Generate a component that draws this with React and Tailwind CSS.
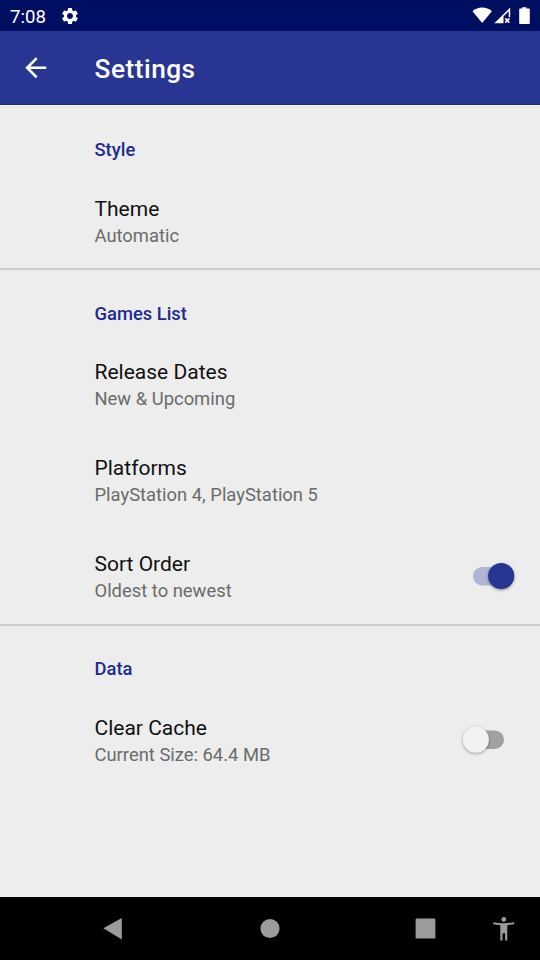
import React from "react";

function Category({ children, className = "" }) {
  return (
    <h2 className={`pl-[94.5px] text-[18.375px] leading-[22px] font-medium text-[#1c2a91] ${className}`}>
      {children}
    </h2>
  );
}

function Toggle({ on }) {
  return (
    <svg className="mr-[20px] shrink-0" width="60" height="40" viewBox="0 0 60 40">
      {on ? (
        <>
          <rect x="13" y="11" width="38" height="18.4" rx="9.2" fill="#b0b5d6" />
          <circle cx="41.2" cy="20.1" r="13.1" fill="#283593" className="drop-shadow-[0_1.5px_1.5px_rgba(0,0,0,0.35)]" />
        </>
      ) : (
        <>
          <rect x="8" y="10.5" width="36" height="18.4" rx="9.2" fill="#a1a1a1" />
          <circle cx="15.8" cy="19.7" r="13.1" fill="#f1f1f1" className="drop-shadow-[0_1.5px_1.5px_rgba(0,0,0,0.35)]" />
        </>
      )}
    </svg>
  );
}

function Preference({ title, summary, children }) {
  return (
    <div className="flex h-24 items-center justify-between pl-[94.5px]">
      <div className="pt-0.5">
        <div className="text-[21px] leading-[27px] text-[#111111]">{title}</div>
        <div className="-mt-px text-[18.4px] leading-[27px] text-[#6b6b6b]">{summary}</div>
      </div>
      {children}
    </div>
  );
}

export default function App() {
  return (
    <div className="flex h-[960px] w-[540px] flex-col overflow-hidden bg-[#ededed] font-[Roboto,sans-serif]">
      <div className="flex h-[31px] shrink-0 items-center bg-[#000e62] pl-[10px] pr-[9px] text-white">
        <span className="w-[37px] pt-[2px] text-[18.6px] leading-[22px]">7:08</span>
        <svg className="ml-[13px] mt-[1px]" width="20" height="20" viewBox="0 0 24 24" fill="#fff">
          <path d="M19.14 12.94c.04-.3.06-.61.06-.94 0-.32-.02-.64-.07-.94l2.03-1.58a.49.49 0 0 0 .12-.61l-1.92-3.32a.488.488 0 0 0-.59-.22l-2.39.96c-.5-.38-1.03-.7-1.62-.94l-.36-2.54a.484.484 0 0 0-.48-.41h-3.84c-.24 0-.43.17-.47.41l-.36 2.54c-.59.24-1.13.57-1.62.94l-2.39-.96c-.22-.08-.47 0-.59.22L2.74 8.87c-.12.21-.08.47.12.61l2.03 1.58c-.05.3-.09.63-.09.94s.02.64.07.94l-2.03 1.58a.49.49 0 0 0-.12.61l1.92 3.32c.12.22.37.29.59.22l2.39-.96c.5.38 1.03.7 1.62.94l.36 2.54c.05.24.24.41.48.41h3.84c.24 0 .44-.17.47-.41l.36-2.54c.59-.24 1.13-.56 1.62-.94l2.39.96c.22.08.47 0 .59-.22l1.92-3.32c.12-.22.07-.47-.12-.61l-2.01-1.58zM12 15.6c-1.98 0-3.6-1.62-3.6-3.6s1.62-3.6 3.6-3.6 3.6 1.62 3.6 3.6-1.62 3.6-3.6 3.6z" />
        </svg>
        <svg className="ml-auto" width="60" height="31" viewBox="0 0 60 31" fill="#fff">
          <path d="M11.2 23 1.5 11.2C4.2 8.8 7.5 7.500 11.2 7.500s7 1.300 9.700 3.700z" />
          <path d="M39.200 7.500V17h-1.500v-5.800l-5.200 5.200v6.800h-9.200z" />
          <path d="m34.200 18.400 4.200 4.200m0-4.200-4.200 4.200" stroke="#fff" strokeWidth="1.6" />
          <path d="M51.200 8.600V7.200h4.200v1.400h2.300c.7 0 1.100.4 1.100 1.100v13.200c0 .7-.4 1.100-1.100 1.100h-8.400c-.7 0-1.100-.4-1.100-1.100V9.700c0-.7.4-1.100 1.100-1.100z" />
        </svg>
      </div>

      <header className="flex h-[74px] shrink-0 items-center border-b border-[#1c2a85] bg-[#283593] text-white shadow-[0_1px_0_#f8f8f8,0_2px_0_#e4e4e4]">
        <svg className="ml-[20px] shrink-0" width="31.5" height="31.5" viewBox="0 0 24 24" fill="#fff">
          <path d="M20 11H7.83l5.59-5.59L12 4l-8 8 8 8 1.41-1.41L7.83 13H20v-2z" />
        </svg>
        <h1 className="ml-[43px] pt-[3px] text-[26.25px] leading-[32px] font-medium tracking-[0.5px]">Settings</h1>
      </header>

      <main className="flex-1">
        <section className="h-[165px] border-b-2 border-[#cbcbcb]">
          <Category className="h-[68px] pt-[34px]">Style</Category>
          <Preference title="Theme" summary="Automatic" />
        </section>
        <section className="h-[356px] border-b-2 border-[#cbcbcb]">
          <Category className="h-[66px] pt-[33px]">Games List</Category>
          <Preference title="Release Dates" summary="New & Upcoming" />
          <Preference title="Platforms" summary="PlayStation 4, PlayStation 5" />
          <Preference title="Sort Order" summary="Oldest to newest">
            <Toggle on />
          </Preference>
        </section>
        <section>
          <Category className="h-[66px] pt-[32px]">Data</Category>
          <Preference title="Clear Cache" summary="Current Size: 64.4 MB">
            <Toggle />
          </Preference>
        </section>
      </main>

      <nav className="h-[63px] shrink-0 bg-black">
        <svg width="540" height="63" viewBox="0 0 540 63" fill="#9b9b9b">
          <path d="M103.3 31.2 121.8 21v21.4z" />
          <circle cx="270" cy="31.5" r="9.6" />
          <rect x="415.6" y="21.6" width="19.8" height="20" rx="1.2" />
          <circle cx="503.8" cy="22.4" r="2.4" />
          <path d="M493.5 25.2c6.800 1.300 13.700 1.300 20.500 0l.4 2-7.100 1v15.200h-2.200v-7.200h-2.600v7.200h-2.200V28.200l-7.200-1z" />
        </svg>
      </nav>
    </div>
  );
}
